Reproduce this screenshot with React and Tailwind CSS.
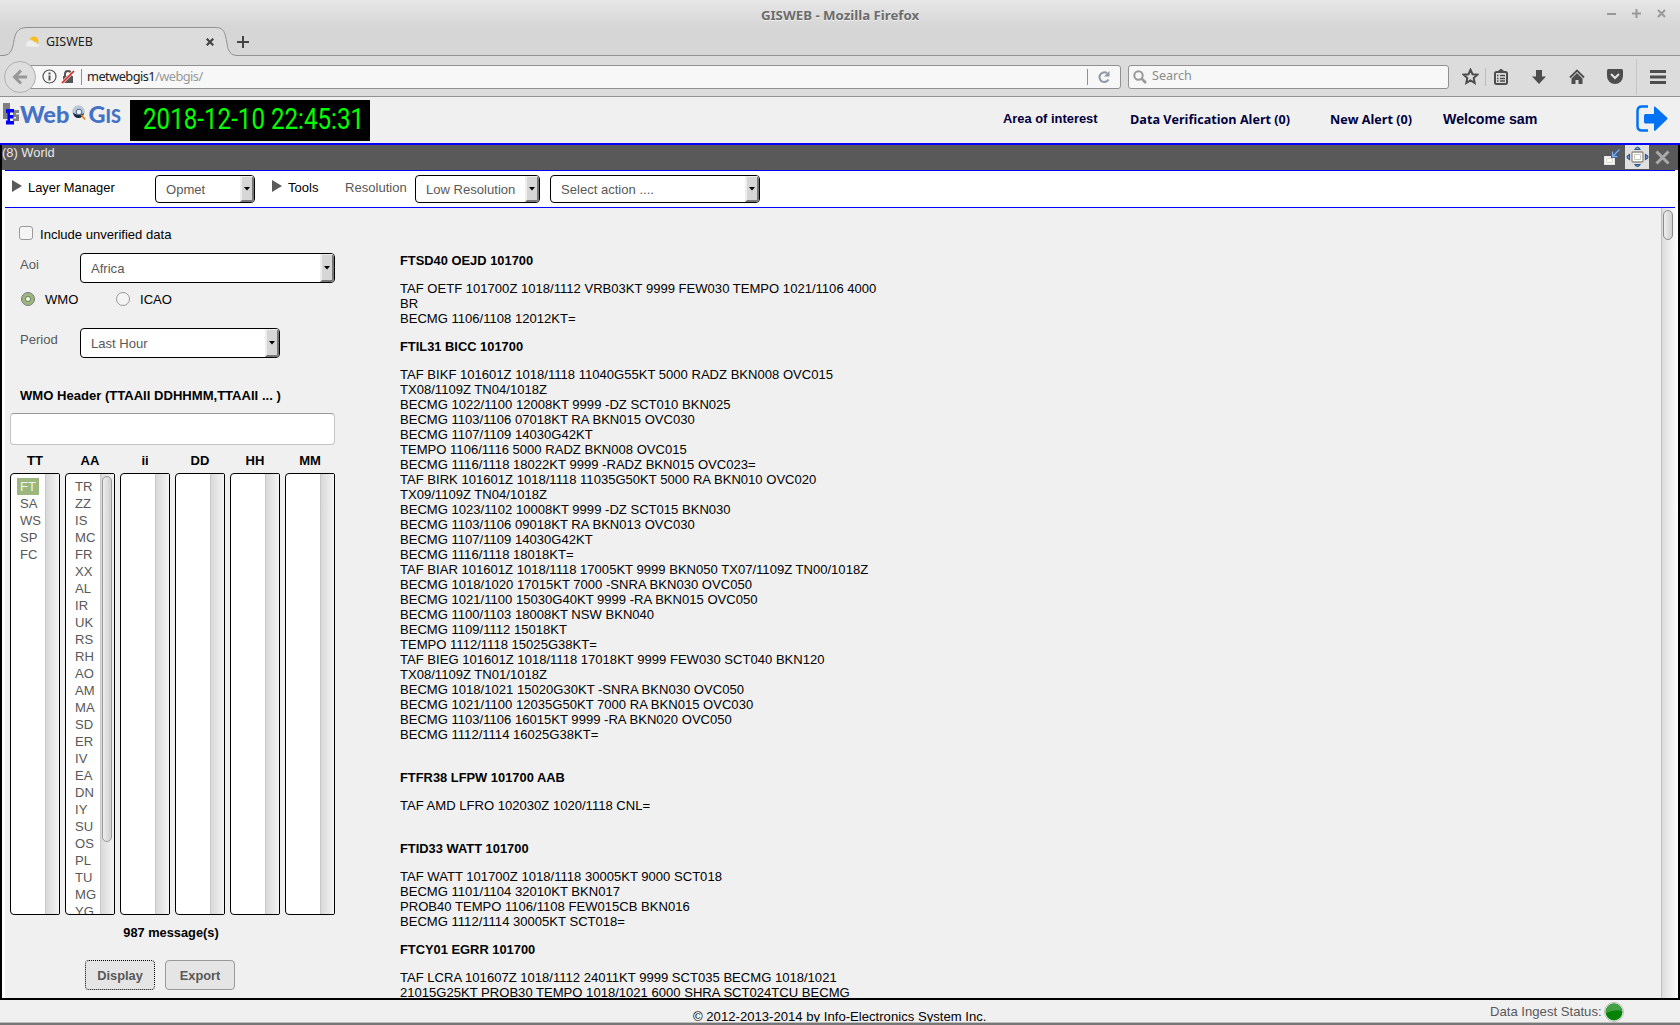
const TAF_GROUPS = [
  { title: 'FTSD40 OEJD 101700', height: 'h-[86px]', lines: ['TAF OETF 101700Z 1018/1112 VRB03KT 9999 FEW030 TEMPO 1021/1106 4000', 'BR', 'BECMG 1106/1108 12012KT='] },
  {
    title: 'FTIL31 BICC 101700',
    height: 'h-[431px]',
    lines: [
      'TAF BIKF 101601Z 1018/1118 11040G55KT 5000 RADZ BKN008 OVC015',
      'TX08/1109Z TN04/1018Z',
      'BECMG 1022/1100 12008KT 9999 -DZ SCT010 BKN025',
      'BECMG 1103/1106 07018KT RA BKN015 OVC030',
      'BECMG 1107/1109 14030G42KT',
      'TEMPO 1106/1116 5000 RADZ BKN008 OVC015',
      'BECMG 1116/1118 18022KT 9999 -RADZ BKN015 OVC023=',
      'TAF BIRK 101601Z 1018/1118 11035G50KT 5000 RA BKN010 OVC020',
      'TX09/1109Z TN04/1018Z',
      'BECMG 1023/1102 10008KT 9999 -DZ SCT015 BKN030',
      'BECMG 1103/1106 09018KT RA BKN013 OVC030',
      'BECMG 1107/1109 14030G42KT',
      'BECMG 1116/1118 18018KT=',
      'TAF BIAR 101601Z 1018/1118 17005KT 9999 BKN050 TX07/1109Z TN00/1018Z',
      'BECMG 1018/1020 17015KT 7000 -SNRA BKN030 OVC050',
      'BECMG 1021/1100 15030G40KT 9999 -RA BKN015 OVC050',
      'BECMG 1100/1103 18008KT NSW BKN040',
      'BECMG 1109/1112 15018KT',
      'TEMPO 1112/1118 15025G38KT=',
      'TAF BIEG 101601Z 1018/1118 17018KT 9999 FEW030 SCT040 BKN120',
      'TX08/1109Z TN01/1018Z',
      'BECMG 1018/1021 15020G30KT -SNRA BKN030 OVC050',
      'BECMG 1021/1100 12035G50KT 7000 RA BKN015 OVC030',
      'BECMG 1103/1106 16015KT 9999 -RA BKN020 OVC050',
      'BECMG 1112/1114 16025G38KT=',
    ],
  },
  { title: 'FTFR38 LFPW 101700 AAB', height: 'h-[71px]', lines: ['TAF AMD LFRO 102030Z 1020/1118 CNL='] },
  { title: 'FTID33 WATT 101700', height: 'h-[101px]', lines: ['TAF WATT 101700Z 1018/1118 30005KT 9000 SCT018', 'BECMG 1101/1104 32010KT BKN017', 'PROB40 TEMPO 1106/1108 FEW015CB BKN016', 'BECMG 1112/1114 30005KT SCT018='] },
  { title: 'FTCY01 EGRR 101700', height: 'h-[59px]', lines: ['TAF LCRA 101607Z 1018/1112 24011KT 9999 SCT035 BECMG 1018/1021', '21015G25KT PROB30 TEMPO 1018/1021 6000 SHRA SCT024TCU BECMG'] },
];

const COLUMNS = [
  { name: 'TT', items: ['FT', 'SA', 'WS', 'SP', 'FC'], selected: 'FT' },
  {
    name: 'AA',
    scroll: true,
    items: ['TR', 'ZZ', 'IS', 'MC', 'FR', 'XX', 'AL', 'IR', 'UK', 'RS', 'RH', 'AO', 'AM', 'MA', 'SD', 'ER', 'IV', 'EA', 'DN', 'IY', 'SU', 'OS', 'PL', 'TU', 'MG', 'YG'],
  },
  { name: 'ii', items: [] },
  { name: 'DD', items: [] },
  { name: 'HH', items: [] },
  { name: 'MM', items: [] },
];

function Select({ value, className }) {
  return (
    <button className={`flex items-stretch overflow-hidden rounded-[4px] border border-black bg-white text-left text-[13.07px] text-[#585858] ${className}`}>
      <span className="flex-1 self-center whitespace-nowrap pl-[10px] pt-[2px]">{value}</span>
      <span className="flex w-[14px] items-center justify-center border-t border-r-2 border-b-2 border-l-2 border-t-[#eee] border-r-[#777] border-b-[#777] border-l-[#eee] bg-[#d6d6d6]">
        <svg width="6" height="4" viewBox="0 0 6 4"><path d="M0 0h6L3 3.6z" fill="#000" /></svg>
      </span>
    </button>
  );
}

function TitleBar() {
  return (
    <div className="flex h-[27px] items-center bg-linear-to-b from-[#e7e7e7] to-[#d6d6d6]">
      <span className="w-[100px]" />
      <h1 className="flex-1 pt-[5px] text-center text-[13.25px] font-bold text-[#6c6c6c] [text-shadow:0_1px_0_#f0f0f0]">GISWEB - Mozilla Firefox</h1>
      <div className="flex w-[100px] justify-end gap-[16px] pr-[14px]">
        <svg width="9" height="9" viewBox="0 0 9 9" stroke="#999" strokeWidth="2"><path d="M0 5h9" /></svg>
        <svg width="9" height="9" viewBox="0 0 9 9" stroke="#999" strokeWidth="2"><path d="M0 4.5h9M4.5 0v9" /></svg>
        <svg width="9" height="9" viewBox="0 0 9 9" stroke="#999" strokeWidth="2"><path d="M1 1l7 7M8 1l-7 7" /></svg>
      </div>
    </div>
  );
}

function TabStrip() {
  return (
    <div className="relative h-[30px] bg-[#d6d6d6]">
      <svg className="absolute inset-0" width="1680" height="30" fill="none">
        <path d="M0 28.5h3c6 0 9-4 10.500-12C15 5 18 1 26 .5h190c8 .5 9 4.500 11 16 1 8 4 12 10 12h1443V30H0z" fill="#dcdcdc" />
        <path d="M0 28.500h3c6 0 9-4 10.500-12C15 5 18 1 26 .5h190c8 .5 9 4.500 11 16 1 8 4 12 10 12h1443" stroke="#919191" />
      </svg>
      <div className="relative flex items-center pt-[5px] pl-[25px]">
        <svg width="15" height="14" viewBox="0 0 15 14">
          <circle cx="9" cy="6" r="4.500" fill="#f9bd22" />
          <path d="M2 12a3 3 0 0 1 0-5 4 4 0 0 1 7 0 2.500 2.500 0 0 1 3 2c3 0 3 3 1 3z" fill="#eee" stroke="#ddd" strokeWidth=".6" />
        </svg>
        <span className="w-[166px] pt-px pl-[6px] text-[12.500px] leading-[18px] text-[#222]">GISWEB</span>
        <svg width="8" height="8" viewBox="0 0 8 8" stroke="#444" strokeWidth="2.200"><path d="M.7.7l6.600 6.600M7.300.7L.7 7.300" /></svg>
        <svg className="ml-[23px]" width="12" height="12" viewBox="0 0 12 12" stroke="#444" strokeWidth="2"><path d="M0 6h12M6 0v12" /></svg>
      </div>
    </div>
  );
}

function NavBar() {
  return (
    <div className="flex h-[40px] items-center border-b border-[#919191] bg-[#dcdcdc]">
      <div className="z-10 ml-[4px] flex size-[32px] items-center justify-center rounded-full border border-[#b0b0b0] bg-[#dedede]">
        <svg width="16" height="16" viewBox="0 0 16 16" fill="none" stroke="#979797" strokeWidth="3"><path d="M15 8H3M9 1.500L2.500 8 9 14.500" /></svg>
      </div>
      <div className="-ml-[6px] flex h-[24px] w-[1091px] items-center rounded-r-[3px] border border-[#919191] bg-[#f7f7f7] pl-[11px]">
        <svg width="15" height="15" viewBox="0 0 15 15" fill="none" stroke="#555"><circle cx="7.500" cy="7.500" r="6.500" strokeWidth="1.200" /><path d="M7.500 6.500v5M7.500 3.500v2" strokeWidth="2" /></svg>
        <svg className="ml-[4px]" width="14" height="14" viewBox="0 0 14 14" fill="none">
          <path d="M4 6V4a3 3 0 0 1 6 0v2" stroke="#555" strokeWidth="2" /><path d="M2 6h10v7H2z" fill="#555" /><path d="M1 13L13 1" stroke="#f7f7f7" strokeWidth="3" /><path d="M1 13L13 1" stroke="#e2231a" strokeWidth="1.700" />
        </svg>
        <span className="ml-[6px] h-[16px] w-px bg-[#919191]" />
        <span className="ml-[5px] flex-1 text-[12.800px] tracking-[-0.55px] text-[#999]"><span className="text-[#222]">metwebgis1</span>/webgis/</span>
        <span className="h-[16px] w-px bg-[#919191]" />
        <svg className="mr-[10px] ml-[10px]" width="12" height="12" viewBox="0 0 12 12" fill="none" stroke="#8c99a5" strokeWidth="2"><path d="M10.500 8.500A4.800 4.800 0 1 1 9 2.200" /><path d="M11.500 0v5.500H6z" fill="#8c99a5" stroke="none" /></svg>
      </div>
      <div className="ml-[7px] flex h-[24px] w-[321px] items-center rounded-[3px] border border-[#919191] bg-[#f7f7f7] pl-[4px] text-[12.600px] text-[#8b8b8b]">
        <svg width="14" height="14" viewBox="0 0 14 14" fill="none" stroke="#999" strokeWidth="2"><circle cx="5.500" cy="5.500" r="4.200" /><path d="M8.500 8.500L13 13" strokeWidth="2.600" /></svg>
        <span className="ml-[5px]">Search</span>
      </div>
      <div className="flex flex-1 items-center pl-[13px] text-[#4d4d4d]">
        <svg width="17" height="17" viewBox="0 0 17 17" fill="none" stroke="currentColor" strokeWidth="2"><path d="M8.500 1.700l2 4.500 4.800.5-3.600 3.300 1 4.900-4.200-2.500-4.200 2.500 1-4.900L1.700 6.700l4.800-.5z" /></svg>
        <span className="ml-[6px] h-[18px] w-px bg-[#bbb]" />
        <svg className="ml-[8px]" width="14" height="16" viewBox="0 0 14 16" fill="none" stroke="currentColor"><rect x="1" y="3" width="12" height="12" rx="1.500" strokeWidth="2" /><path d="M4 2.500L7 0l3 2.500z" fill="currentColor" /><path d="M3 6.500h1.500M3 9.500h1.500M3 12h1.500M6 6.500h5M6 9.500h5M6 12h5" strokeWidth="1.300" /></svg>
        <svg className="ml-[24px]" width="14" height="16" viewBox="0 0 14 16" fill="currentColor"><path d="M4 1h6V7.500H14l-7 7.500L0 7.500h4z" /></svg>
        <svg className="ml-[23px]" width="16" height="16" viewBox="0 0 16 16" fill="none"><path d="M1 8.500l7-7 7 7" stroke="currentColor" strokeWidth="1.800" /><path d="M2.500 9.500L8 4l5.500 5.500V15H9.500v-4h-3v4h-4z" fill="currentColor" /></svg>
        <svg className="ml-[22px]" width="16" height="15" viewBox="0 0 16 15"><path d="M1.500 0h13Q16 0 16 1.500V7a8 8 0 0 1-16 0V1.500Q0 0 1.500 0z" fill="currentColor" /><path d="M4 5l4 4 4-4" fill="none" stroke="#e4e4e4" strokeWidth="2" /></svg>
        <span className="ml-[13px] h-[36px] w-px bg-[#c6c6c6]" />
        <svg className="ml-[13px]" width="16" height="14" viewBox="0 0 16 14" stroke="currentColor" strokeWidth="3"><path d="M0 1.500h16M0 7h16M0 12.500h16" /></svg>
      </div>
    </div>
  );
}

function AppHeader() {
  return (
    <header className="flex h-[48px] shrink-0 border-b-2 border-[#0000ff] bg-[#f0f0f0]">
      <div className="flex w-[130px] pt-[5px] pl-[3px]">
        <svg className="mt-px" width="17" height="22" viewBox="0 0 17 22">
          <path d="M0 0h7v16H0z" fill="#808080" />
          <path d="M10 7h6v3h-3v1.500h3V18h-6v-2.500h3V14h-3z" fill="#808080" />
          <path d="M3 6h8v3.500H7V12h3.500v3.500H7V18h4v3.500H3v-4h1.500V10H3z" fill="#00f" />
        </svg>
        <span className="font-['Lato'] text-[23.500px] leading-[24px] font-black text-[#4472c4]">Web</span>
        <svg className="mt-[3px] ml-[3px]" width="14" height="16" viewBox="0 0 14 16" fill="none">
          <circle cx="6.500" cy="6.500" r="5.800" fill="#b4c9de" stroke="#c7c7c7" /><path d="M1 7.500Q6 12 12 8q-1 5-5.500 5Q2 13 1 7.500z" fill="#182840" /><circle cx="7" cy="7" r="2.800" fill="#e8f2fa" stroke="#536a84" /><path d="M9.500 10l3.500 4.500" stroke="#dd8b22" strokeWidth="2" />
        </svg>
        <span className="ml-[2px] font-['Lato'] text-[23.500px] leading-[24px] font-black text-[#4472c4]">G<span className="text-[18px]">IS</span></span>
      </div>
      <div className="mt-[3px] flex h-[41px] w-[240px] items-center overflow-hidden bg-black">
        <span className="ml-[13px] origin-left scale-x-[.833] pb-[3px] font-['Roboto'] text-[29px] leading-none font-normal whitespace-pre text-[#00ff00]">2018-12-10 22:45:31</span>
      </div>
      <nav className="flex flex-1 justify-end pt-[12px] leading-[20px] font-bold text-[#00003c]">
        <a className="w-[127px] font-['Liberation_Sans'] text-[12.900px]">Area of interest</a>
        <a className="w-[200px] pt-[1px] font-['Open_Sans'] text-[12.600px]">Data Verification Alert (0)</a>
        <a className="w-[113px] pt-[1px] font-['Open_Sans'] text-[12.600px]">New Alert (0)</a>
        <a className="w-[193px] font-['Liberation_Sans'] text-[14.200px]">Welcome sam</a>
      </nav>
      <svg className="mt-[8px] mr-[12px]" width="32" height="28" viewBox="0 0 32 28" fill="none"><path d="M12 1.500H6Q1.500 1.500 1.500 6v15q0 4.500 4.500 4.500h6" stroke="#0072f5" strokeWidth="2.500" /><path d="M9.500 9H18V2.500Q18 1 19.500 2L31 12.500q1 1 0 2L19.500 25.500Q18 26.500 18 25v-6.500H9.500Q8 18.500 8 17v-6.500Q8 9 9.500 9z" fill="#0072f5" /></svg>
    </header>
  );
}

function WindowBar() {
  return (
    <div className="-mx-[3px] flex h-[25px] bg-[#595959] pr-[8px]">
      <span className="flex-1 text-[12.900px] leading-[16px] text-[#e8e8e8]">(8) World</span>
      <svg className="mt-[3px]" width="18" height="18" viewBox="0 0 18 18" fill="none"><rect x="1.500" y="8.500" width="10" height="8" fill="#fff" stroke="#e2e2e2" /><path d="M3.500 10.500h6v4h-6z" stroke="#d5d5c8" /><path d="M16.500 1.500l-6 6M9.500 2.500v6h6" stroke="#2d548e" strokeWidth="3" /><path d="M16.500 1.500l-6 6M9.500 3.500v5h5" stroke="#85b1ea" strokeWidth="1.300" /></svg>
      <span className="ml-[4px] flex size-[24px] items-center justify-center bg-[#e0e0e0]">
        <svg width="24" height="24" viewBox="0 0 24 24" fill="none"><rect x="7" y="7" width="11" height="10" rx="1" fill="#fff" stroke="#8a8a80" strokeWidth="1.300" /><path d="M9.500 9.500h6v5h-6z" stroke="#c8c8bb" /><g fill="#7fa3d3" stroke="#2d548e" strokeWidth="1.200"><path d="M10 4.500q2.500-5 5 0zM10 19.500q2.500 4 5 0zM4.500 9.500q-5 2.500 0 5zM20.500 9.500q5 2.500 0 5z" /></g></svg>
      </span>
      <svg className="mt-[5px] ml-[6px]" width="15" height="15" viewBox="0 0 15 15" stroke="#aaa" strokeWidth="3"><path d="M1.500 1.500l12 12M13.500 1.500l-12 12" /></svg>
    </div>
  );
}

function Toolbar() {
  return (
    <div className="flex h-[38px] shrink-0 border-y border-[#0000ff] bg-white pt-[4px] text-[13.07px]">
      <svg className="mt-[5px] ml-[7px]" width="10" height="12" viewBox="0 0 10 12"><path d="M0 0l10 6-10 6z" fill="#595959" /></svg>
      <span className="w-[133px] pt-[3px] pl-[6px] text-[12.900px]">Layer Manager</span>
      <Select value="Opmet" className="h-[28px] w-[100px]" />
      <svg className="mt-[5px] ml-[17px]" width="10" height="12" viewBox="0 0 10 12"><path d="M0 0l10 6-10 6z" fill="#595959" /></svg>
      <span className="w-[63px] pt-[3px] pl-[6px]">Tools</span>
      <span className="w-[70px] pt-[3px] text-[#585858]">Resolution</span>
      <Select value="Low Resolution" className="h-[28px] w-[125px]" />
      <Select value="Select action ...." className="ml-[10px] h-[28px] w-[210px]" />
    </div>
  );
}

function CodeList({ column }) {
  return (
    <div className="w-[50px]">
      <div className="h-[24px] pt-px text-center text-[13px] leading-[22px] font-bold">{column.name}</div>
      <div className="flex h-[442px] overflow-hidden rounded-l-[4px] rounded-r-[2px] border border-black bg-white">
        <ul className="flex-1 pt-[4px] pl-[6px] text-[13.07px] text-[#585858]">
          {column.items.map((item) => (
            <li key={item} className={`h-[17px] w-[22px] pl-[3px] leading-[17px] ${item === column.selected ? 'bg-[#9bb77d] text-[#eef3e8]' : ''}`}>{item}</li>
          ))}
        </ul>
        <div className="w-[14px] border-l border-[#c8c8c8] bg-linear-to-r from-[#d9d9d9] to-[#f4f4f4] pt-[2px] pl-px">
          {column.scroll && <div className="h-[366px] w-[10px] rounded-full border border-[#999] bg-linear-to-r from-[#eee] to-[#cfcfcf]" />}
        </div>
      </div>
    </div>
  );
}

function FilterPanel() {
  return (
    <aside className="w-[395px] shrink-0 pl-[5px] text-[13.07px]">
      <label className="flex h-[45px] pt-[18px] pl-[9px]">
        <span className="size-[14px] rounded-[3px] border border-[#999] bg-[#f5f5f5]" />
        <span className="pl-[7px] leading-[18px]">Include unverified data</span>
      </label>
      <div className="flex h-[38px] pl-[10px] text-[#585858]">
        <span className="w-[60px] pt-[2px]">Aoi</span>
        <Select value="Africa" className="h-[30px] w-[255px]" />
      </div>
      <div className="flex h-[37px] pt-[1px] pl-[11px]">
        <span className="size-[14px] rounded-full border border-[#777] bg-[#f4f4f4] shadow-[inset_0_0_0_3px_#9bb77d,inset_0_0_0_4px_#738b5b]" />
        <span className="w-[81px] pl-[10px] leading-[16px]">WMO</span>
        <span className="size-[14px] rounded-full border border-[#999] bg-[#f4f4f4]" />
        <span className="pl-[10px] leading-[16px]">ICAO</span>
      </div>
      <div className="flex h-[58px] pl-[10px] text-[#585858]">
        <span className="w-[60px] pt-[2px]">Period</span>
        <Select value="Last Hour" className="h-[30px] w-[200px]" />
      </div>
      <div className="h-[27px] pl-[10px] leading-[20px] font-bold">WMO Header (TTAAII DDHHMM,TTAAII ... )</div>
      <input className="block h-[32px] w-[325px] rounded-[4px] border border-[#c4c4c4] border-t-[#999] bg-white" />
      <div className="mt-[4px] flex gap-[5px]">
        {COLUMNS.map((column) => <CodeList key={column.name} column={column} />)}
      </div>
      <div className="w-[322px] pt-[8px] text-center text-[12.800px] leading-[20px] font-bold">987 message(s)</div>
      <div className="flex gap-[10px] pt-[17px] pl-[75px] text-[12.800px] font-bold text-[#585858]">
        <button className="h-[30px] w-[70px] rounded-[4px] border border-dotted border-black bg-[#e5e5e5] pt-[2px]">Display</button>
        <button className="h-[30px] w-[70px] rounded-[4px] border border-[#999] bg-[#e5e5e5] pt-[2px]">Export</button>
      </div>
    </aside>
  );
}

function Messages() {
  return (
    <main className="flex-1 overflow-hidden pt-[45px] text-[13.07px] leading-[15px] whitespace-nowrap">
      {TAF_GROUPS.map((group) => (
        <section key={group.title} className={group.height}>
          <h2 className="mb-[13px] text-[12.880px] font-bold">{group.title}</h2>
          {group.lines.map((line, i) => <p key={i}>{line}</p>)}
        </section>
      ))}
    </main>
  );
}

export default function App() {
  return (
    <div className="flex h-[1025px] w-[1680px] flex-col overflow-hidden bg-[#f0f0f0] font-['Liberation_Sans',sans-serif] text-black">
      <div className="shrink-0 font-['Noto_Sans',sans-serif]">
        <TitleBar />
        <TabStrip />
        <NavBar />
      </div>
      <AppHeader />
      <div className="flex h-[855px] shrink-0 flex-col border-x-2 border-b-2 border-black bg-white px-[3px]">
        <WindowBar />
        <Toolbar />
        <div className="flex min-h-0 flex-1 bg-[#f0f0f0]">
          <FilterPanel />
          <Messages />
          <div className="-mr-[3px] w-[17px] border-l border-[#c0c0c0] bg-linear-to-r from-[#dcdcdc] to-white pt-[2px] pl-[1px]">
            <div className="h-[30px] w-[10px] rounded-full border border-[#8a8a8a] bg-linear-to-r from-[#eee] to-[#cfcfcf]" />
          </div>
        </div>
      </div>
      <footer className="flex h-[22px] text-[13.130px]">
        <div className="w-[1490px] pt-[7px] pl-[693px] leading-[20px]">© 2012-2013-2014 by Info-Electronics System Inc.</div>
        <div className="flex text-[#585858]"><span className="w-[114px] pt-[2px] leading-[20px]">Data Ingest Status:</span>
          <svg className="mt-[2px]" width="20" height="20" viewBox="0 0 20 20"><circle cx="10" cy="10" r="9.500" fill="#fff" stroke="#bbb" /><circle cx="10" cy="10" r="8.500" fill="#078307" /><path d="M2 10a8 8 0 0 1 16-1Q10 7 2 11z" fill="#45a045" /></svg>
        </div>
      </footer>
      <div className="mt-auto h-[3px] border-b-2 border-[#777] bg-[#bbb]" />
    </div>
  );
}
